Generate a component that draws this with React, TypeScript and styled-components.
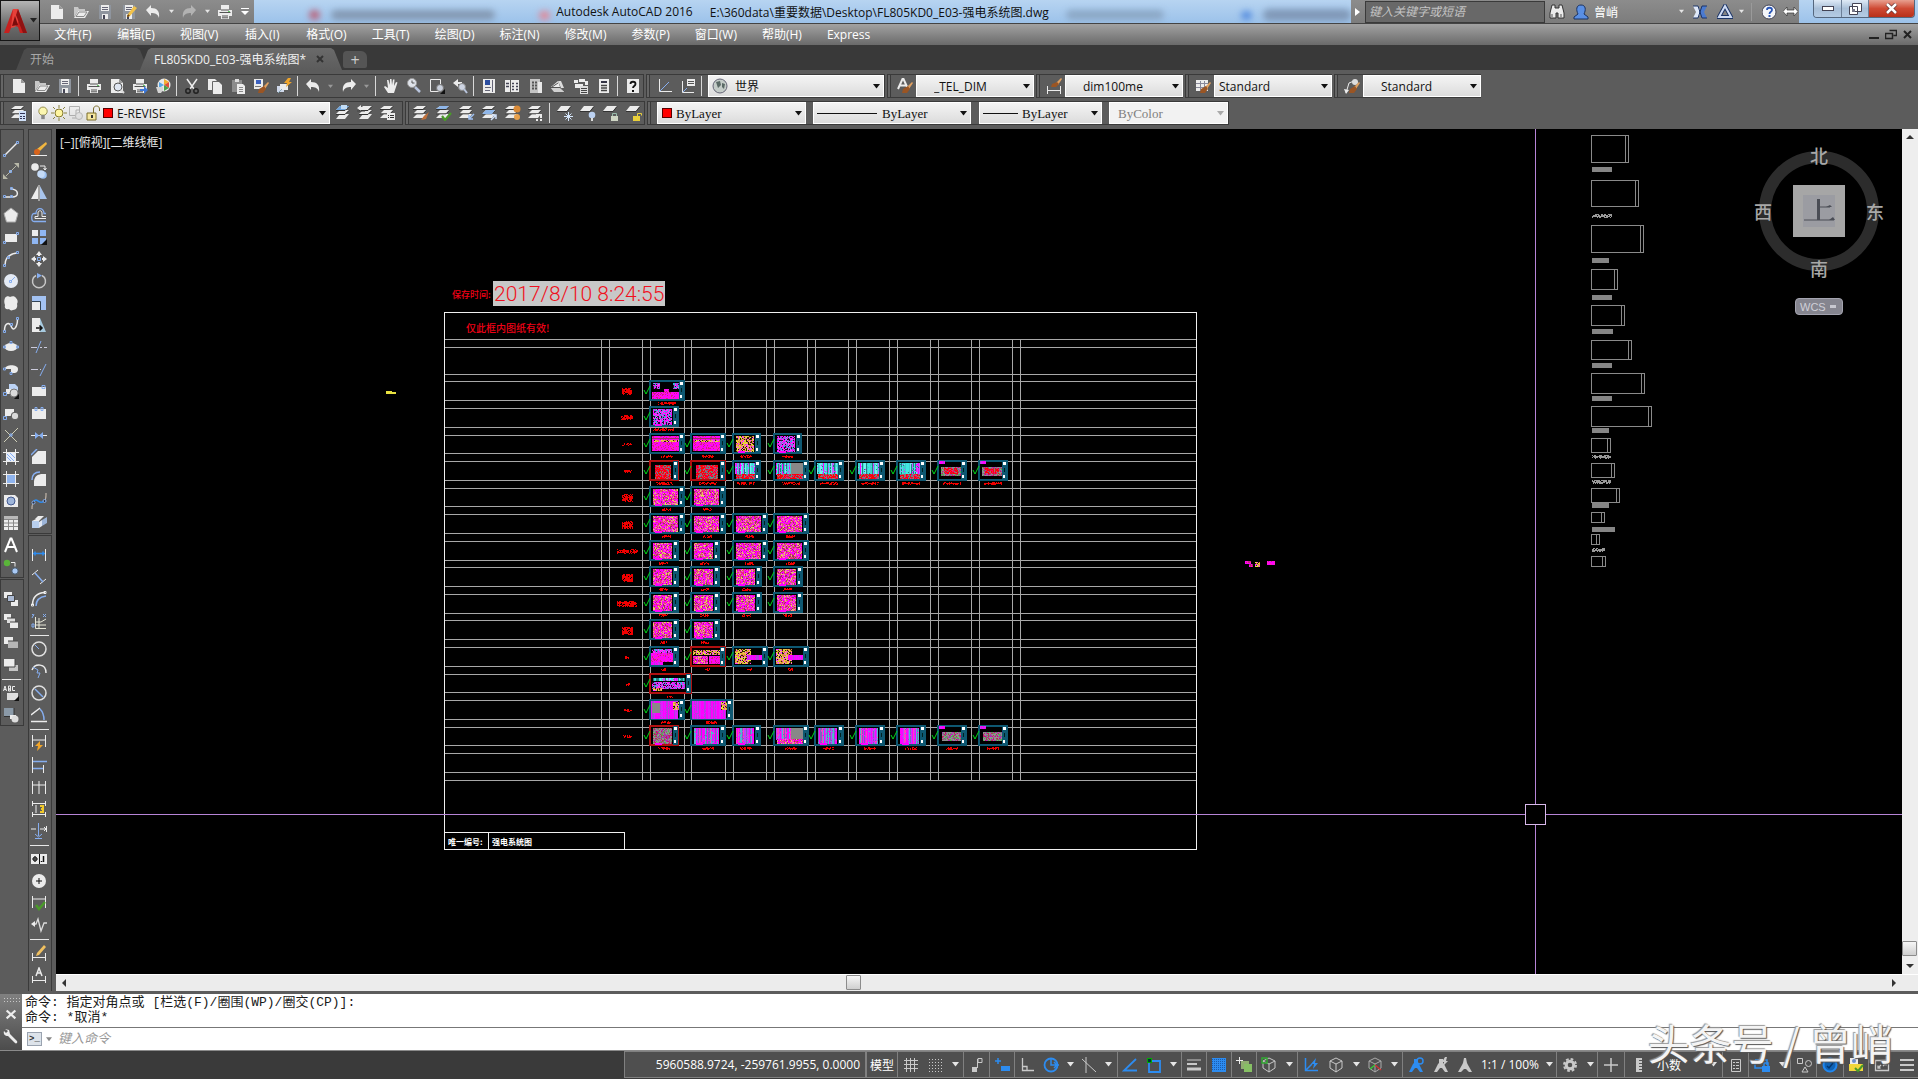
import React from "react";
import styled, { createGlobalStyle } from "styled-components";

/* ------------------------------------------------------------------ */
/* Base                                                                */
/* ------------------------------------------------------------------ */

const UI = `"Open Sans", "Noto Sans CJK SC", sans-serif`;
const MONO = `"Liberation Mono", "Noto Sans CJK SC", monospace`;

const GlobalStyle = createGlobalStyle`
  *, *::before, *::after { box-sizing: border-box; }
  body { margin: 0; background: #3a3a3a; font-family: ${UI}; font-size: 12px; overflow: hidden; }
  button, input, select { font: inherit; color: inherit; margin: 0; padding: 0; border: 0; background: none; border-radius: 0; outline: none; }
  svg { display: block; flex: none; }
`;

const Shell = styled.div`
  display: flex;
  flex-direction: column;
  height: 100vh;
  background: #5c5c5c;
`;

/* ------------------------------------------------------------------ */
/* Icons                                                               */
/* ------------------------------------------------------------------ */

type PProps = { d: string; c?: string; w?: number; f?: string };
const P = ({ d, c = "#ececec", w = 1, f = "none" }: PProps) => (
  <path d={d} stroke={c} strokeWidth={w} fill={f} />
);
const F = ({ d, c = "#ececec" }: { d: string; c?: string }) => <path d={d} fill={c} />;

const BL = "#86aef0";
const BR = "#2d8cf0";
const LG = "#c9c9c9";

const printer = (
  <>
    <F d="M4 1h8v5H4zM1 6h14v6H1zM4 10h8v5H4z" />
    <P d="M2.500 8.500h11M4 6h8M5 12h6M5 13.800h6" c="#555" />
    <F d="M11 7h2v1h-2z" c="#6c6" />
  </>
);
const page = <><F d="M2 1h8l4 4v10H2z" /><F d="M10 1v4h4z" c="#999" /></>;
const folder = <><F d="M1 13V3h4l1 2h6v2H5z" c="#c8c8c8" /><F d="M5 7h11l-4 7H1z" /><P d="M3 12.500h8l3-4.500H6z" c="#8a8a8a" /></>;
const floppy = <><F d="M2 1h12v14H2z" c="#8f959e" /><F d="M4 1h8v6H4zM5 10h6v5H5z" /><F d="M6 11h2v4H6z" c="#445" /><P d="M5 3.500h6M5 5.500h6" c="#667" /></>;
const undo = <F d="M1 6l5-5v3c6 0 9 3 8 10-1-4-4-5-8-5v3z" />;
const redo = <F d="M15 6l-5-5v3c-6 0-9 3-8 10 1-4 4-5 8-5v3z" />;
const stack = (
  <>
    <F d="M6 1h9l-4 4H2zM6 5h9l-4 4H2zM6 9h9l-4 5H2z" />
    <P d="M2 5.500h9l4-4M2 9.500h9l4-4" c="#333" />
  </>
);
const smallStack = <><F d="M4 1h9l-3 3H0zM4 5h9l-3 4H0zM4 9h9l-3 4H0z" /><P d="M0 4.500h10l3-3M0 8.800h10l3-3" c="#333" /></>;
const oneLayer = <><F d="M4 1h10l-4 5H0z" /><P d="M0 6.500h10l4-5" c="#333" /></>;
const dimH = (y: number) => <P d={`M1.500 ${y - 5}v12M14.500 ${y - 5}v12`} />;
const brush = <><F d="M15 4l-5 5 2 2 4-6z" c="#e0a060" /><F d="M11 8l-5 3-1 4 5 0 3-4z" c="#9a5524" /></>;
const person = (c: string) => <F d="M6 2h4v4l1 1 4 8h-3l-3-4h-2l-3 4H1l4-8 1-1z" c={c} />;
const cube = (c = LG) => <P d="M8 1l6 3v7l-6 4-6-4V4zM2 4l6 3 6-3M8 7v8" c={c} />;

const ICONS: Record<string, React.ReactNode> = {
  new: page,
  open: folder,
  save: floppy,
  saveAs: <>{floppy}<F d="M13 2l3 2-7 8-3 1 1-3z" c="#f2c24a" /><F d="M6 13l1-3 2 2z" c="#7a4b10" /></>,
  undo,
  redo,
  redoDim: <g opacity=".45">{redo}</g>,
  print: printer,
  preview: <>{page}<circle cx="9" cy="9" r="4" fill="#dfe6f2" stroke="#555" /><P d="M12 12l3 3" w={2} c="#ddd" /></>,
  publish: <>{printer}<F d="M8 11h4V8l4 4-4 4v-3H8z" c="#3d78d8" /></>,
  print3d: <><circle cx="9" cy="7" r="6.500" fill="#e8e8e8" /><F d="M9 1l5 3-5 3z" c="#f5b030" /><F d="M9 7l5-3v6z" c="#e0503a" /><F d="M9 7v6l5-3z" c="#4aa14a" /><F d="M9 7L4 4v6z" c="#57a7e8" /><F d="M1 9h7v3l-2 3H3z" c="#d4d4d4" /></>,
  cut: <><P d="M3 1l7 10M13 1L6 11" w={1.500} /><circle cx="4" cy="13" r="2.200" fill="none" stroke="#222" strokeWidth="1.500" /><circle cx="12" cy="13" r="2.200" fill="none" stroke="#222" strokeWidth="1.500" /></>,
  copy: <><F d="M1 1h7l2 2v9H1z" /><F d="M6 4h6l3 3v9H6z" /><P d="M5.500 15V3.500h6" c="#666" /></>,
  paste: <><F d="M2 2h10v12H2z" c="#8c8c8c" /><F d="M5 1h4v3H5z" c="#ddd" /><F d="M7 6h6l2 2v8H7z" /><P d="M9 9.500h4M9 11.500h4M9 13.500h4" c="#888" /></>,
  match: <><F d="M1 1h9v10H1z" /><F d="M3 2h5v4H3z" c="#3d62c0" /><P d="M2 8.500h6" c="#777" />{brush}</>,
  block: <><F d="M1 8h7v6H1z" c="#cfd8ea" /><F d="M4 6h8v6H4z" /><F d="M12 0L8 5h3l-1 4 6-5h-3l2-4z" c="#f0a52a" /><P d="M2 15l4-4" c="#8ab" /></>,
  hand: <F d="M5 15l-4-6 1-1 3 2-1-8h1.500l1.200 5L7 1h1.500l.5 6 1-5.500h1.500L11 8l2-4 1.500.5L12 12l-1 3z" />,
  zoomRt: <><circle cx="6" cy="5" r="4.500" fill="#dfe3ea" stroke="#999" /><P d="M6 2.500V5h2.500" c="#555" /><P d="M9 9l5 5" w={2.500} c="#b8c4dc" /></>,
  zoomWin: <><P d="M1.500 1.500h10v12h-10z" /><circle cx="11" cy="10" r="3.500" fill="#c9cfdb" stroke="#777" /><F d="M16 11v5h-5z" c="#111" /></>,
  zoomPrev: <><F d="M1 5l5-4v3h4v2H6v3z" /><circle cx="10" cy="9" r="3.500" fill="#cdd4e2" stroke="#888" /><P d="M12 11l3 4" w={2} c="#b8c4dc" /></>,
  props: <><F d="M2 1h12v14H2z" /><F d="M4 2h5v5H4z" c="#2c4ea0" /><P d="M11.500 2v12M4 9.500h6M4 12.500h5" c="#667" /></>,
  designCenter: <><F d="M1 2h5v12H1zM7 2h8v12H7z" /><P d="M2 5.500h3M2 8.500h3M8 5.500h2M12 5.500h2M8 8.500h2M12 8.500h2M8 11.500h2M12 11.500h2" c="#445" w={1.500} /></>,
  toolPalette: <><F d="M3 1h10v14H3z" c="#c4c4c4" /><F d="M11 4h4v11h-4z" c="#e8e8e8" /><P d="M5 4.500h2M5 7.500h2M5 10.500h2M8 4.500h2M8 7.500h2M8 10.500h2" w={2} c="#555" /></>,
  sheetSet: <><F d="M1 9l7-6 2 6z" /><F d="M8 3l3 0 3 7h-3z" c="#ddd" /><F d="M0 9h10l5 5H4z" c="#d0d0d0" /><P d="M2 9l6-4M0 9.500h10l5 4.500" c="#555" /></>,
  markup: <><F d="M1 2h4v3H1zM6 1h6v3H6zM12 3h3v4h-3zM2 6h8v4H2z" /><F d="M7 8h8v8H7z" c="#ddd" /><P d="M8 10.500h6M8 12.500h6M8 14.500h6" c="#444" /></>,
  calc: <><F d="M3 1h10v14H3z" /><F d="M5 3h6v2H5z" c="#334" /><P d="M5 7.500h6M5 10h6M5 12.500h6" c="#444" w={1.500} /></>,
  help: <><F d="M2 1h12v14H2z" /><P d="M5.500 6c0-3 5-3 5 0 0 2-2.500 2-2.500 4" c="#111" w={1.800} /><F d="M7 12h2v2H7z" c="#111" /></>,
  ucs: <><P d="M2.500 1v12.500H15" /><P d="M3 13l9-9" c={BL} /></>,
  ucsNamed: <><P d="M2.500 3v11.500H14" /><F d="M7 1h8v7H7z" /><P d="M8 3.500h6M8 5.500h6" c="#555" /><P d="M3 14l4-4" c={BL} /></>,
  textStyle: <><P d="M1 11L5.500 1h1L11 11M3 7.500h6" w={2} />{brush}</>,
  dimStyle: <><P d="M1.500 8v8M14.500 8v8M2 12.500h12" /><F d="M15 0l-5 5 2 2 4-6z" c="#e0a060" /><F d="M11 4L6 6 5 9h5l3-3z" c="#9a5524" /></>,
  tableStyle: <><F d="M1 2h12v11H1z" /><P d="M1 5.500h12M1 9.500h12M5.500 3v10M9.500 3v10" c="#889" />{brush}</>,
  leaderStyle: <><P d="M2 15L5 5l5-2" /><F d="M0 11l5 1-3 4z" /><circle cx="11" cy="4" r="3" fill="#ddd" />{brush}</>,
  layerProps: <>{smallStack}<F d="M8 6h7v10H8z" c="#cfe0f8" /><P d="M9 8.500h5M9 11.500h2M12 11.500h2M9 13.500h2M12 13.500h2" c="#335" /></>,
  bulb: <><circle cx="8" cy="6" r="4.800" fill="#fbf6b0" stroke="#8a8340" /><F d="M6 10h4v5H6z" c="#888" /></>,
  sun: <><circle cx="8" cy="8" r="4" fill="#fff6a0" stroke="#857a30" /><P d="M8 0v3M8 13v3M0 8h3M13 8h3M2 2l2 2M12 12l2 2M14 2l-2 2M4 12l-2 2" c="#8a8340" /></>,
  vpFreeze: <g opacity=".6"><P d="M1.500 1.500h10v9h-10zM4 13h4v-8h4" c="#888" /><circle cx="11" cy="11" r="3.500" fill="#ddd" stroke="#999" /></g>,
  unlock: <><F d="M2 8h9v7H2z" c="#f5e7a0" /><P d="M2 8h9v7H2zM8.500 8V4c0-4 6-4 6 0v2" c="#7a6c2a" /><F d="M6 10h2v3H6z" c="#333" /></>,
  layerCurrent: <>{stack}<F d="M6 1h9l-4 4H2z" c="#6ea4dc" /><F d="M7 0h6v4H7z" c="#c2dcf5" /></>,
  layerPrev: <>{stack}<F d="M0 3l4-3v2h4v2H4v2z" /><P d="M0 6h8" c="#444" /></>,
  layerState: <>{smallStack}<F d="M7 8h8v7H7z" /><P d="M8 10.500h1M10 10.500h4M8 12.500h1M10 12.500h4" c="#333" /></>,
  layMatch: <>{smallStack}<F d="M16 7l-5 4-3 4 5-1z" c="#c0703a" /></>,
  layCheck: <>{smallStack}<F d="M4 1h9l-3 3H0z" c="#8fb6e8" /><P d="M6 11l3 4 6-7" c="#4a9a2a" w={2.200} /></>,
  layIso: <>{smallStack}<P d="M15 9l-5 5m0-4v4h4" c="#9fc0f2" w={1.500} /></>,
  layUniso: <>{smallStack}<F d="M4 5h9l-3 4H0z" c="#8fb6e8" /><P d="M9 15l5-5m-4 0h4v4" c="#cfdff8" w={1.500} /></>,
  layFreezeVp: <>{smallStack}<circle cx="12" cy="4" r="3.500" fill="#d88a38" /><circle cx="12" cy="12" r="3" fill="#e8a04a" /></>,
  layWalk: <>{smallStack}<F d="M8 9h2v4H8zM12 9h2v4h-2zM8 14h2v2H8zM12 14h2v2h-2z" /></>,
  layFreeze: <>{oneLayer}<P d="M11.500 7v9M7 11.500h9M8.500 8.500l6 6M14.500 8.500l-6 6" c="#d5e6fb" /></>,
  layOff: <>{oneLayer}<circle cx="12" cy="10" r="3.300" fill="#bcd2f2" /><F d="M11 13h2v3h-2z" c="#ddd" /></>,
  layLock: <>{oneLayer}<F d="M8 11h7v5H8z" c="#cfd6c4" /><P d="M9.500 11V8.500h4V11" c="#9ba" /></>,
  layUnlock: <>{oneLayer}<F d="M7 11h7v5H7z" c="#e8cf3a" /><P d="M11.500 11V8.500h4v2" c="#e8cf3a" /></>,

  line: <><P d="M2 14L14 2" w={1.500} /><P d="M.5 13.500h2v2h-2zM13.500.5h2v2h-2z" c={BL} /></>,
  xline: <><P d="M3 13L13 3" c="#b8b8a8" /><F d="M0 16v-5l5 5zM16 0v5l-5-5z" c="#b8b8a8" /><P d="M6.500 7.500h2v2h-2z" c={BL} /></>,
  pline: <><P d="M2 12h6c9 1 8-8 0-8" w={1.500} /><P d="M.5 10.500h2v2h-2zM7.500 10.500h2v2h-2zM7.500 2.500h2v2h-2z" c={BL} /></>,
  polygon: <P d="M8 1l7 5.500-2.500 8.500h-9L1 6.500z" f="#ececec" c="#aaa" />,
  rect: <><F d="M2 5h12v8H2z" /><P d="M.5 12.500h2v2h-2zM13.500 3.500h2v2h-2z" c={BL} /></>,
  arc: <><P d="M2 14C2 7 6 3 14 2" w={1.500} /><P d="M.5 13.500h2v2h-2zM4.500 5.500h2v2h-2zM13.500.5h2v2h-2z" c={BL} /></>,
  circle: <><circle cx="8" cy="8" r="7" fill="#e4eaf4" /><P d="M8 8l4-4M6.500 7.500h2v2h-2z" c={BL} /></>,
  cloud: <F d="M2 3c1-2 4-2 5-1 2-1 5-1 6 1 2 2 2 4 1 6 1 3-1 6-4 6-2 1-3 0-4-1-3 1-5-1-4-4-1-2-1-5 0-7z" />,
  spline: <><P d="M1.500 14c0-9 5-9 7-4s6 0 6-8" w={1.500} /><P d="M.5 13.500h2v2h-2zM7.500 6.500h2v2h-2zM13.500.5h2v2h-2z" c={BL} /></>,
  ellipse: <><ellipse cx="8" cy="8" rx="6.500" ry="4" fill="#ececec" /><P d="M.5 7h2v2h-2zM13.500 7h2v2h-2zM7 2.500h2v2h-2z" c={BL} /></>,
  ellipseArc: <><path d="M2 8c0-5 13-5 13 0s-5 4-7 4V8z" fill="#ececec" /><P d="M.5 7h2v2h-2zM7 11.500h2v2h-2z" c={BL} /></>,
  insert: <><F d="M6 1h6l3 3v5H6z" c="#bcd3f5" /><F d="M3 6h8v5H3z" /><circle cx="11" cy="10" r="4" fill="#dadada" stroke="#777" /><P d="M.5 9.500h3v3h-3z" c={BL} /><F d="M16 11v5h-5z" c="#111" /></>,
  makeBlock: <><F d="M2 4h9v7H2z" /><circle cx="12" cy="11" r="3.800" fill="#dadada" stroke="#555" /><P d="M.5 11.500h3v3h-3z" c={BL} /></>,
  point: <><P d="M1 15L15 1M2 3l12 12" c="#cfcfb8" /><P d="M7 7h2v2H7z" c={BL} /></>,
  hatch: <><F d="M4 4h8v8H4z" c="#e6eefb" /><P d="M4 8l4 4M4 5l7 7M7 4l5 5" c={BL} /><P d="M0 3.500h16M0 12.500h16M3.500 0v16M12.500 0v16" /></>,
  gradient: <><F d="M4 4h9v9H4z" c="#8fb4ee" /><P d="M0 3.500h16M0 12.500h16M3.500 0v16M12.500 0v16" /></>,
  region: <><F d="M1 2h11l3 3v9H1z" /><circle cx="8" cy="8" r="4" fill="#9fb6da" stroke="#445a90" /></>,
  table: <><F d="M1 1h14v14H1z" /><F d="M1 1h14v3H1z" c="#b8b8b8" /><P d="M1 4.500h14M1 8h14M1 11.500h14M5.500 4v11M10.500 4v11" c="#888" /></>,
  mtext: <P d="M2 15L7.500 1.500h1L14 15M4 10h8" w={2} c="#fff" />,
  addSel: <><circle cx="4" cy="4" r="3.200" fill="#5ab53a" /><circle cx="12" cy="12" r="3.200" fill="#a9c9f5" stroke="#456" /><P d="M8 3.500h4v4" /></>,
  front: <><F d="M1 1h8v6H1zM8 9h7v6H8z" /><P d="M4.500 4.500h7v6h-7z" c="#444" f="#a9b8d2" /></>,
  back: <><F d="M1 1h7v6H1z" /><F d="M4 5h8v5H4z" c="#ddd" /><F d="M7 9h8v6H7z" /><P d="M4 5h8M7 9h8" c="#444" /></>,
  above: <><F d="M1 2h9v7H1z" /><F d="M5 6h10v7H5z" c="#b5b5b5" /><P d="M5 6h10" c="#444" /></>,
  under: <><F d="M6 8h9v6H6z" c="#c5c5c5" /><F d="M1 2h11v8H1z" /><P d="M1 10h11V2" c="#444" /></>,
  textFront: <><P d="M.5 6l1.500-5L3.500 6M1 4.500h2M5.500 1v5h2V4h-2 2V1h-2M12 1.500H9.500v4H12" /><F d="M4 8h11v7H4z" c="#ddd" /><F d="M16 11v5h-5z" c="#111" /></>,
  hatchBack: <><F d="M1 1h10v8H1z" c="#8b9aa8" /><P d="M1 9.500h10V1" c="#333" /><F d="M7 8h6v4H7z" /><circle cx="12" cy="12" r="3.500" fill="#ddd" /></>,

  erase: <><P d="M0 14.500h16" /><F d="M15 1l1 2-7 7-3-2z" c="#f0b640" /><circle cx="6" cy="11" r="3" fill="#d8641c" /></>,
  copyObj: <><circle cx="4" cy="4" r="3.800" fill="#ececec" /><circle cx="12" cy="12" r="3.800" fill="#9cc0f0" /><circle cx="10" cy="11" r="3.800" fill="#c4daf6" /><P d="M9 3h5v4M12.500 5l1.500 2 1.500-2" /></>,
  mirror: <><F d="M7 1v13H0z" /><F d="M9 1v13h7z" c="#a8c4ec" /><P d="M8 0v16" /></>,
  offset: <><P d="M15 6.500h-2C13 0 5 0 5 6.500H3c-3 0-3 8 0 8h12" c={BL} w={1.300} /><P d="M15 9.500h-4V6c0-3-4-3-4 0v3.500H4v2h11" /></>,
  array: <><F d="M1 1h6v6H1z" /><F d="M9 1h6v6H9zM1 9h6v6H1zM9 9h6v6H9z" c="#8fb6f2" /><F d="M16 10v6h-6z" c="#111" /></>,
  move: <><F d="M8 0l3 4H5zM8 16l3-4H5zM0 8l4-3v6zM16 8l-4-3v6z" /><P d="M8 3v2M8 11v2M3 8h2M11 8h2" w={2} /><P d="M6.500 6.500h3v3h-3z" c={BL} /></>,
  rotate: <><P d="M5 2.500a6.500 6.500 0 1 0 6 0" w={1.500} c="#c8c8c8" /><F d="M6 0l5 2.500-5 3z" c={BL} /></>,
  scale: <><F d="M1 1h14v14H1z" c="#a3c2f2" /><F d="M1 7h8v8H1z" /><P d="M1 6.500h8.500V15" c="#345" /></>,
  stretch: <><F d="M1 1h8v14H1z" /><F d="M9 1l6 14H9z" c="#a8cbe0" /><P d="M5 11h5M8.500 8.500L11 11l-2.500 2.500" c="#111" w={1.500} /></>,
  trim: <><P d="M0 8.500h6M9 8.500h2M13 8.500h3" c="#ccd" /><P d="M5 14L10 2" c={BL} /></>,
  extend: <><P d="M0 8.500h7M9 8.500h1" c="#ccd" /><P d="M9 15L15 3" c={BL} /></>,
  breakPt: <><F d="M1 4h14v9H1z" /><P d="M11 2.500h3v3h-3z" c={BL} /></>,
  breakObj: <><F d="M1 4h14v10H1z" /><P d="M4 2.500h2v3H4zM10 2.500h2v3h-2z" c={BL} /></>,
  join: <><P d="M0 8.500h16" /><F d="M4 5l4 3.500L4 12zM12 5L8 8.500l4 3.500z" c={BL} /></>,
  chamfer: <><F d="M7 2h8v13H1V8z" /><P d="M0 6l6-6" c={BL} w={1.500} /></>,
  fillet: <><F d="M10 3h5v12H3v-5c1-5 3-6 7-7z" /><P d="M1 9C1 4 4 1 9 1" c={BL} w={1.500} /></>,
  blend: <><P d="M1 16c0-3 0-4 1.500-6M14 8c1-3 1-5 1-8" c="#d8c8b8" /><P d="M2.500 9C6 3 8 13 13 8" c={BR} w={1.500} /><circle cx="2.500" cy="9.500" r="1.500" fill="#333" stroke={BL} /><circle cx="13.500" cy="8" r="1.500" fill="#333" stroke={BL} /></>,
  explode: <><F d="M7 1h6l-3 3H4z" /><F d="M1 6h7v7H1z" c="#b8cfee" /><F d="M11 5l5-3v6l-5 3z" c="#9cb4d8" /><F d="M1 6l4-2h5l-2 2z" c="#eee" /><F d="M8 7l3-2v6l-3 2z" c="#dfe6f2" /></>,

  dLinear: <>{dimH(7)}<P d="M2 6.500h12M4 4.500v4M12 4.500v4" c={BR} w={1.500} /></>,
  dAligned: <><P d="M1 6l6-5M9 15l6-5" /><P d="M4 4l8 9" c={BL} w={1.500} /></>,
  dArc: <><P d="M1.500 14C1.500 7 5 2 14 1.500" w={1.500} /><P d="M5 15C5 10 8 6 15 5" c={BL} w={1.500} /><P d="M.5 13h2v2h-2zM13 .5h2v2h-2z" /></>,
  dOrdinate: <><P d="M4.500 4v11.500H15M8 5v10M5 9h5l5-3M5 12h10" c="#e8e8d8" /><P d="M1 1l2 2M3 1l-2 4M12 1l3 3M15 1l-3 3M1 11h2v3H1z" c={BL} /></>,
  dRadius: <><circle cx="8" cy="8" r="7" fill="none" stroke="#e0e0e0" strokeWidth="1.500" /><P d="M8 8L4 4" c={BL} /></>,
  dJogged: <><P d="M1 7C4 0 15 0 15 10" w={1.500} /><P d="M2 4l5 3-1 3h3l-2 5" c={BL} /></>,
  dDiameter: <><circle cx="8" cy="8" r="7" fill="none" stroke="#e0e0e0" strokeWidth="1.500" /><P d="M4 4l8 8" c={BL} w={1.500} /></>,
  dAngular: <><P d="M0 14.500h16M0 8l9-7" w={1.500} /><P d="M9 2c3 3 4 7 4 11" c={BL} w={1.500} /></>,
  dQuick: <>{dimH(5)}<P d="M2 5h12" /><F d="M9 6l-5 5h3l-1 5 6-6H9z" c="#f0a52a" /></>,
  dBaseline: <><P d="M1.500 0v16M12.500 8v8" /><P d="M2 4.500h14M2 11.500h10" c={BL} w={1.500} /></>,
  dContinue: <P d="M1.500 2v13M8 2v13M14.500 2v13M2 6h12" />,
  dSpace: <><P d="M1 2.500h14M1 13.500h14M1.500 0v5M14.500 0v5M1.500 11v5M14.500 11v5M5 4v8" /><P d="M9 5h3v3h-2M12 8v3H9" c="#f0c82a" w={2} /></>,
  dBreak: <><P d="M0 6h5M9 6h6M13 4l2 2-2 2M15.500 3v6" /><P d="M7.500 0v13M4 11l3.500 3 3.500-3M4 15.500h7" c={BL} /></>,
  tolerance: <><F d="M0 3h16v10H0z" /><P d="M8.500 3v10M4 5v6M1.500 8h5" c="#111" /><circle cx="4" cy="8" r="2" fill="none" stroke="#111" /><P d="M12.500 5v6M10.500 10v1" c="#111" w={1.500} /></>,
  centerMark: <><circle cx="8" cy="8" r="7" fill="#ececec" /><P d="M8 5v6M5 8h6" c="#111" /></>,
  inspect: <>{dimH(6)}<P d="M2 4h12" /><P d="M5 10l3 4 6-7" c="#4a9a2a" w={2.500} /></>,
  jogLine: <><P d="M2 7h3l2-5 3 12 3-8h3" w={1.300} c="#ddd" /><F d="M0 7l4-3v6z" /></>,
  dEdit: <><P d="M1.500 8v8M14.500 8v8M2 12.500h12" /><F d="M13 0l2 2-7 8-3 1 1-3z" c="#f0c060" /></>,
  dTextEdit: <><P d="M1.500 9v7M14.500 9v7M2 13.500h12" /><P d="M5 9l3-8 3 8M6 6h4" w={1.500} /></>,
  dUpdate: <P d="M1.500 2v4M14.500 2v4M5 3h6" />,

  grid: <P d="M3.500 1v14M7.500 1v14M11.500 1v14M1 3.500h14M1 7.500h14M1 11.500h14" c={LG} />,
  snap: <g stroke={LG} strokeDasharray="1 2"><path d="M1 2.500h15M1 5.500h15M1 8.500h15M1 11.500h15M1 14.500h15" /></g>,
  infer: <><P d="M9 1.500h4v4H9zM8.500 2v9" c={LG} /><F d="M3 10h5v5H3z" c={LG} /></>,
  dyn: <><P d="M4 1v6M1 4h6" c={BR} w={1.500} /><F d="M7 9h9v5H7z" c={BR} /></>,
  ortho: <P d="M3.500 1v12.500H15M3 9.500h5V13" c={LG} w={1.300} />,
  polar: <><circle cx="8" cy="8" r="6.500" fill="none" stroke={BR} strokeWidth="1.800" /><P d="M8 2v6h8M11 5l3 3-3 3" c={BR} w={1.500} /></>,
  iso: <P d="M1 2l14 13M5 0v16" c={LG} />,
  otrack: <P d="M14 2L2 13.500h13" c={BR} w={1.800} />,
  osnap: <><P d="M3 4h11v11H3z" c={BR} w={1.800} /><F d="M1 1h5v5H1z" c="#0a0" /><F d="M2 2h3v3H2z" c="#033" /></>,
  lwt: <><P d="M1 3h14" c={LG} /><P d="M1 7h10" c={LG} w={2} /><P d="M1 12h14" c={LG} w={3} /></>,
  transparency: <><F d="M1 1h14v14H1z" c={BR} /><g stroke="#1b5cae" strokeDasharray="1 1"><path d="M1 2.500h14M1 4.500h14M1 6.500h14M1 8.500h14M1 10.500h14M1 12.500h14" /></g></>,
  cycling: <><F d="M5 4h8v8H5z" c="#8fae70" /><F d="M8 7h8v8H8z" c="#86bf64" /><P d="M3.500 0v7M0 3.500h7" /></>,
  osnap3d: <>{cube()}<P d="M1 1h5v5H1z" c="#3a3" w={1.500} /></>,
  ducs: <><P d="M2.500 1v12.500H15M3 13L9 7" c={BR} w={1.500} /><F d="M13 1L8 7h3l-1 5 5-6h-3z" c={BR} /></>,
  cube: cube(),
  gizmo: <>{cube("#aaa")}<P d="M8 8l-5 4" c="#3c3" w={1.500} /><P d="M8 8l6 5" c="#c33" w={1.500} /></>,
  annVisible: <>{person(BR)}<circle cx="12" cy="4" r="3" fill="none" stroke={BR} strokeWidth="1.500" /></>,
  annAuto: <>{person(LG)}<F d="M12 0l-3 5h2l-1 4 5-5h-2l1-4z" c={LG} /></>,
  annScale: <F d="M7 1h2l1 5 1 2 4 7h-3l-3-3H7l-3 3H1l4-7 1-2z" c={LG} />,
  gear: <><circle cx="8" cy="8" r="3.800" fill="none" stroke={LG} strokeWidth="3" /><circle cx="8" cy="8" r="6" fill="none" stroke={LG} strokeWidth="2" strokeDasharray="2.700 2" /></>,
  plus: <P d="M8 1v14M1 8h14" c={LG} w={1.500} />,
  ruler: <><F d="M5 1h6v14H5z" c={LG} /><P d="M8 3.500h3M8 6.500h3M8 9.500h3M8 12.500h3" c="#555" /></>,
  quickProps: <><P d="M3.500 2.500h9v12h-9z" c={LG} /><P d="M5 5.500h2M8 5.500h3M5 8.500h2M8 8.500h3M5 11.500h2M8 11.500h3" c={LG} /></>,
  lockUi: <><P d="M1 3h12v5M1 3v8h7" c={BR} w={1.500} /><F d="M8 9h8v6H8z" c={BR} /><P d="M10 9V6h4v3" c={BR} w={1.500} /></>,
  isolate: <><P d="M1.500 1.500h5v5h-5zM6 15l3-5 3 5z" c={LG} /><circle cx="12.500" cy="6.500" r="3" fill="none" stroke={LG} /></>,
  hardware: <><circle cx="8" cy="8" r="6.500" fill="#0f62b4" stroke="#2287ee" strokeWidth="2" /><P d="M5 9l2 2 4-5" c="#04366e" w={1.500} /></>,
  trusted: <><F d="M2 1h8v6H2z" /><F d="M1 7h14v7H1z" c="#f0d63a" /><circle cx="6" cy="4" r="2" fill="#6a8cc8" /><P d="M7 11l3 3 5-6" c="#4a9a2a" w={2} /></>,
  clean: <P d="M1.500 3.500h13v10h-13zM4 11l3-3M4 8.500V11h2.500M12 6L9 9M12 8.500V6H9.500" c={LG} w={1.300} />,
  menu: <P d="M1 3h14M1 8h14M1 13h14" c={LG} w={1.800} />,

  binoc: <><F d="M3 1h3v3h4V1h3l2 8v5h-6V9H7v5H1V9z" /><P d="M3 1h3v3h4V1h3l2 8v5H9V9H7v5H1V9z" c="#333" /><P d="M3 10v3M12 10v3" c="#555" /></>,
  user: <><F d="M8 1c5 0 5 5 3 9l4 3v2H1v-2l4-3C3 6 3 1 8 1z" c="#5a8fe4" /><P d="M8 1c5 0 5 5 3 9l4 3v2H1v-2l4-3C3 6 3 1 8 1z" c="#1b3260" /></>,
  exchange: <><F d="M1 2h5l3 6-3 6H1l3-6z" c="#dfe8f8" /><F d="M15 2h-5L7 8l3 6h5l-3-6z" c="#4a7ad0" /><P d="M1 2h5l4 12h5M15 2h-5L6 14H1" c="#1d3566" /></>,
  a360: <><P d="M8 2L2 13h12z" c="#1d3566" w={4} /><P d="M8 2L2 13h12z" c="#cfdcf4" w={2} /></>,
  helpRound: <><circle cx="7" cy="8" r="7" fill="#f4f6fa" stroke="#445" /><P d="M5 6c0-3 5-3 5 0 0 2-2.500 1.500-2.500 4" c="#2a57b8" w={1.800} /><F d="M6.500 11h2v2h-2z" c="#2a57b8" /></>,
  wrench: <F d="M2 1l4 1 1 4 7 7c1 2-1 3-2 2L5 8C2 8 0 6 1 3l2 2 2-2z" />,
  closeX: <P d="M3 4l10 9M13 4L3 13" w={2.500} />,
};

const Icon = ({ name, size = 16 }: { name: string; size?: number }) => (
  <svg width={size} height={size} viewBox="0 0 16 16" aria-hidden="true">{ICONS[name]}</svg>
);

const Caret = ({ color = "#e6e6e6", w = 7 }: { color?: string; w?: number }) => (
  <svg width={w} height="5" viewBox="0 0 7 5" aria-hidden="true"><path d="M0 0h7L3.500 4.500z" fill={color} /></svg>
);

const IconButton = styled.button<{ $w?: number; $h?: number }>`
  display: flex;
  align-items: center;
  justify-content: center;
  flex: none;
  width: ${(p) => p.$w ?? 23}px;
  height: ${(p) => p.$h ?? 22}px;
`;

/* ------------------------------------------------------------------ */
/* Header                                                              */
/* ------------------------------------------------------------------ */

const Header = styled.header`
  display: flex;
  flex: none;
  background: linear-gradient(#6a6a6a, #5e5e5e);
`;
const AppButton = styled.button`
  display: flex;
  align-items: center;
  justify-content: center;
  gap: 1px;
  width: 40px;
  height: 41px;
  border: 1px solid #161616;
  background: linear-gradient(#b4b4b4, #6c6c6c 60%, #585858);
`;
const HeaderRows = styled.div`
  flex: 1;
  min-width: 0;
`;
const TitleBar = styled.div`
  display: flex;
  height: 24px;
  border-bottom: 1px solid #444;
  background: linear-gradient(#b7d4f1, #9cc2ea);
`;
const QuickAccess = styled.div`
  display: flex;
  align-items: center;
  padding: 0 1px 0 5px;
  background: linear-gradient(#8c8c8c, #7c7c7c);
`;
const TitleArea = styled.div`
  position: relative;
  flex: 1;
  display: flex;
  align-items: center;
  justify-content: center;
  gap: 17px;
  overflow: hidden;
  color: #111;
  font-size: 12px;
  white-space: nowrap;
`;
const Smudge = styled.span<{ $l: number; $w: number; $c: string; $h: number }>`
  position: absolute;
  left: ${(p) => p.$l}%;
  top: ${(p) => 15 - p.$h / 2}px;
  width: ${(p) => p.$w}%;
  height: ${(p) => p.$h}px;
  border-radius: 6px;
  background: ${(p) => p.$c};
  filter: blur(3px);
`;
const TitleText = styled.span`position: relative;`;
const InfoCenter = styled.div`
  display: flex;
  align-items: center;
  background: linear-gradient(#8c8c8c, #7c7c7c);
  color: #fff;
`;
const InfoSearch = styled.input`
  width: 180px;
  height: 22px;
  margin-left: 2px;
  padding-left: 3px;
  border: 1px solid #3a3a3a;
  background: #686868;
  font-style: italic;
  &::placeholder { color: #c4c4c4; opacity: 1; }
`;
const UserName = styled.button`
  width: 82px;
  padding-left: 1px;
  text-align: left;
`;
const InfoRule = styled.span`
  width: 1px;
  height: 18px;
  margin: 0 6px;
  background: #9a9a9a;
`;
const WindowButtons = styled.div`
  display: flex;
  height: 18px;
  margin: 0 3px 0 14px;
  border: 1px solid #55677e;
  border-top: 0;
  border-radius: 0 0 4px 4px;
  overflow: hidden;
`;
const WinButton = styled.button<{ $close?: boolean }>`
  display: flex;
  align-items: center;
  justify-content: center;
  width: ${(p) => (p.$close ? 46 : 27)}px;
  background: ${(p) => (p.$close ? "linear-gradient(#e8a090, #cf4a34 50%, #b8301a)" : "linear-gradient(#dfeaf6, #a8bfd8 50%, #b4cbe4)")};
  & + & { border-left: 1px solid #6c7f98; }
`;
const MenuBar = styled.nav`
  display: flex;
  align-items: center;
  height: 21px;
  padding: 0 2px 0 14px;
  gap: 25px;
  background: linear-gradient(#a2a2a2, #6a6a6a);
`;
const MenuItem = styled.button`
  min-width: 38px;
  color: #fff;
  font-size: 12px;
  line-height: 20px;
  white-space: nowrap;
`;
const DocButtons = styled.div`
  display: flex;
  margin-left: auto;
`;

const TabBar = styled.div`
  display: flex;
  align-items: flex-end;
  flex: none;
  height: 25px;
  padding-left: 16px;
  background: #393939;
`;
const Tab = styled.div<{ $active?: boolean; $w: number }>`
  display: flex;
  align-items: center;
  gap: 10px;
  width: ${(p) => p.$w}px;
  height: 22px;
  padding-left: 14px;
  margin-right: ${(p) => (p.$active ? 1 : -8)}px;
  background: ${(p) => (p.$active ? "linear-gradient(#6a6a6a, #5c5c5c)" : "#4b4b4b")};
  color: ${(p) => (p.$active ? "#f0f0f0" : "#a8a8a8")};
  clip-path: polygon(0 100%, 8px 2px, 11px 0, calc(100% - 11px) 0, calc(100% - 8px) 2px, 100% 100%);
  white-space: nowrap;
`;
const NewTab = styled.button`
  width: 24px;
  height: 17px;
  margin-bottom: 2px;
  background: #555;
  color: #ccc;
  font-size: 16px;
  line-height: 16px;
  border-radius: 4px 6px 2px 2px;
`;

/* ------------------------------------------------------------------ */
/* Toolbars                                                            */
/* ------------------------------------------------------------------ */

const Toolbars = styled.div`
  display: flex;
  flex-direction: column;
  flex: none;
  gap: 3px;
  padding: 4px 0;
`;
const ToolbarRow = styled.div`
  display: flex;
  gap: 2px;
`;
const Group = styled.div<{ $grip: number; $end?: number }>`
  display: flex;
  align-items: center;
  height: 24px;
  padding-left: ${(p) => p.$grip}px;
  padding-right: ${(p) => p.$end ?? 0}px;
  box-shadow: inset 0 0 0 1px #3a3a3a, inset 3px 0 0 #666, inset 4px 0 0 #3a3a3a;
`;
const ToolSep = styled.span`
  flex: none;
  width: 1px;
  height: 20px;
  margin: 0 3px 0 2px;
  background: #d8d8d8;
`;
const ComboBox = styled.div<{ $w: number; $l?: number; $off?: boolean }>`
  display: flex;
  align-items: center;
  position: relative;
  width: ${(p) => p.$w}px;
  height: 22px;
  margin-left: ${(p) => p.$l ?? 0}px;
  border: 1px solid #fff;
  background: ${(p) => (p.$off ? "#f2f2f2" : "linear-gradient(#f4f4f4, #dcdcdc)")};
  color: ${(p) => (p.$off ? "#808080" : "#111")};
`;
const ComboSelect = styled.select<{ $pad: number; $serif?: boolean }>`
  appearance: none;
  position: absolute;
  inset: 0;
  width: 100%;
  padding-left: ${(p) => p.$pad}px;
  font-family: ${(p) => (p.$serif ? `"Liberation Serif", serif` : UI)};
  font-size: ${(p) => (p.$serif ? 13 : 12)}px;
  &:disabled { opacity: 1; color: #808080; }
`;
const ComboLead = styled.span`
  display: flex;
  align-items: center;
  gap: 1px;
  padding-left: 3px;
`;
const ComboCaret = styled.span`
  margin: 0 3px 0 auto;
  pointer-events: none;
`;
const Swatch = styled.span`
  width: 10px;
  height: 10px;
  margin-left: 1px;
  border: 1px solid #500;
  background: #f00;
`;
const Stroke = styled.span<{ $w: number }>`
  width: ${(p) => p.$w}px;
  height: 1px;
  background: #111;
`;

type ComboProps = { label: string; value: string; w: number; pad: number; l?: number; off?: boolean; serif?: boolean; lead?: React.ReactNode };
const Combo = ({ label, value, w, pad, l, off, serif, lead }: ComboProps) => (
  <ComboBox $w={w} $l={l} $off={off}>
    <ComboLead>{lead}</ComboLead>
    <ComboSelect aria-label={label} $pad={pad} $serif={serif} disabled={off} defaultValue={value}>
      <option>{value}</option>
    </ComboSelect>
    <ComboCaret><Caret color={off ? "#aaa" : "#111"} /></ComboCaret>
  </ComboBox>
);

/* "|" is a separator, "v" a drop-down arrow, anything else an icon. */
const Tools = ({ items }: { items: string }) => (
  <>
    {items.split(" ").map((n, i) =>
      n === "|" ? <ToolSep key={i} /> : n === "v" ? (
        <IconButton key={i} $w={13} aria-label="more"><Caret color="#999" w={5} /></IconButton>
      ) : (
        <IconButton key={i} aria-label={n}><Icon name={n} /></IconButton>
      )
    )}
  </>
);

/* ------------------------------------------------------------------ */
/* Workspace                                                           */
/* ------------------------------------------------------------------ */

const Body = styled.main`
  display: flex;
  flex: 1;
  min-height: 0;
`;
const Dock = styled.aside`
  display: flex;
  gap: 4px;
  flex: none;
  width: 56px;
  overflow: hidden;
`;
const DockColumn = styled.div`
  display: flex;
  flex-direction: column;
  gap: 1px;
  width: 24px;
`;
const DockGroup = styled.div`
  display: flex;
  flex-direction: column;
  align-items: center;
  flex: none;
  padding: 9px 2px 0 0;
  box-shadow: inset 0 0 0 1px #3a3a3a;
`;
const DockSep = styled.span`
  width: 19px;
  height: 1px;
  margin: 3px 0 2px;
  background: #e8e8e8;
`;
const VTools = ({ items }: { items: string }) => (
  <DockGroup>
    {items.split(" ").map((n, i) =>
      n === "|" ? <DockSep key={i} /> : <IconButton key={i} aria-label={n}><Icon name={n} /></IconButton>
    )}
  </DockGroup>
);

const View = styled.section`
  display: flex;
  flex-direction: column;
  flex: 1;
  min-width: 0;
`;
const ViewRow = styled.div`
  display: flex;
  flex: 1;
  min-height: 0;
`;
const Canvas = styled.div`
  position: relative;
  flex: 1;
  min-width: 0;
  overflow: hidden;
  background: #000;
`;
const Model = styled.svg`
  position: absolute;
  inset: 0;
  width: 100%;
  height: 100%;
`;
const ViewportLabel = styled.div`
  position: absolute;
  left: 4px;
  top: 6px;
  color: #e6e6e6;
  font-size: 12px;
  line-height: 16px;
`;
const Compass = styled.svg`
  position: absolute;
  right: 17px;
  top: 14px;
  overflow: visible;
`;
const Wcs = styled.button`
  position: absolute;
  right: 59px;
  top: 169px;
  display: flex;
  align-items: center;
  justify-content: space-between;
  width: 48px;
  height: 17px;
  padding: 0 6px 0 4px;
  border: 1px solid #a4a4b0;
  border-radius: 4px;
  background: #85858f;
  color: #d0d0d8;
  font: 11px "Liberation Sans", sans-serif;
`;
const VScroll = styled.div`
  display: flex;
  flex-direction: column;
  width: 16px;
  background: #eee;
`;
const HScroll = styled.div`
  display: flex;
  flex: none;
  height: 17px;
  padding-right: 16px;
  border-top: 1px solid #fff;
  background: #ececec;
`;
const Space = styled.span<{ $n: number }>`flex: ${(p) => p.$n} 1 0;`;
const Thumb = styled.span`
  width: 15px;
  height: 15px;
  border: 1px solid #8c8c8c;
  border-radius: 1px;
  background: linear-gradient(#f6f6f6, #cfcfcf);
`;

/* ---- drawing content ---- */

const rnd = (seed: number) => {
  let s = (seed * 2654435761) >>> 0;
  return () => {
    s = (s + 0x6d2b79f5) >>> 0;
    let t = Math.imul(s ^ (s >>> 15), s | 1);
    t ^= t + Math.imul(t ^ (t >>> 7), t | 61);
    return ((t ^ (t >>> 14)) >>> 0) / 4294967296;
  };
};

const PALETTES: Record<string, string[]> = {
  n: ["#ff00ff", "#ff00ff", "#ff00ff", "#f02080", "#e8d060", "#ff60c0", "#a03060", "#d07060"],
  h: ["#ff00ff", "#ff00ff", "#ff00ff", "#ff20c0", "#d02080"],
  y: ["#e8e040", "#e8c040", "#ff40ff", "#302000", "#e08040"],
  c: ["#ff00ff", "#ff20ff", "#30b8d8", "#a050e0", "#ff40ff", "#201030"],
  r: ["#ff0000", "#ff0000", "#e01030", "#a07070", "#509090", "#ff0060"],
  g: ["#909090", "#b030b0", "#909090", "#c02060", "#50b050"],
  s: ["#40e8e0", "#ff00ff", "#40d0d0", "#208080", "#c060ff", "#70f0f0"],
  m: ["#ff00ff", "#c040ff", "#ff00ff", "#50b8d0", "#8060c0", "#ff40c0"],
  b: ["#ff00ff", "#ff00ff", "#e020ff", "#b040e0"],
};

const noise = (x: number, y: number, w: number, h: number, kind: string, seed: number) => {
  const r = rnd(seed);
  const pal = PALETTES[kind[0]];
  const stripes = kind[0] === "s" || kind[0] === "m" || kind[0] === "b";
  const cols = Array.from({ length: w }, () => pal[Math.floor(r() * pal.length)]);
  const paths: Record<string, string> = {};
  for (let j = 0; j < h; j++) {
    for (let i = 0; i < w; i++) {
      const c = stripes && r() < 0.85 ? cols[i] : pal[Math.floor(r() * pal.length)];
      paths[c] = (paths[c] ?? "") + `M${x + i} ${y + j}h1v1h-1z`;
    }
  }
  return Object.entries(paths).map(([c, d]) => <path key={c} d={d} fill={c} />);
};

const scribble = (cx: number, y: number, w: number, h: number, seed: number, color = "#f00000") => {
  const r = rnd(seed + 77);
  let d = "";
  const x0 = Math.round(cx - w / 2);
  for (let j = 0; j < h; j++) for (let i = 0; i < w; i++) {
    const edge = j === 0 || j === h - 1;
    if (r() < (edge ? 0.5 : 0.85)) d += `M${x0 + i} ${y + j}h1v1h-1z`;
  }
  return <path d={d} fill={color} />;
};

const COLS = [650, 691, 733, 774, 815, 856, 897, 938, 979];

/* One sheet: total width followed by the pattern key. */
const ROWS: { y: number; label: [number, number]; caption: number; sheets: string[] }[] = [
  { y: 381, label: [10, 6], caption: 18, sheets: ["34T"] },
  { y: 407, label: [12, 4], caption: 21, sheets: ["28c"] },
  { y: 434, label: [10, 2], caption: 12, sheets: ["34H", "34H", "27y", "27c"] },
  { y: 461, label: [9, 2], caption: 18, sheets: ["28R", "34R", "27S", "34G", "28S", "28S", "28S", "28r", "28r"] },
  { y: 487, label: [11, 7], caption: 9, sheets: ["34n", "34n"] },
  { y: 514, label: [11, 7], caption: 9, sheets: ["34n", "34n", "34n", "34n"] },
  { y: 541, label: [21, 4], caption: 9, sheets: ["28n", "28n", "34n", "34n"] },
  { y: 567, label: [11, 7], caption: 9, sheets: ["28n", "28n", "28n", "28n"] },
  { y: 593, label: [20, 5], caption: 9, sheets: ["28n", "28n", "28n", "28n"] },
  { y: 620, label: [11, 7], caption: 8, sheets: ["28n", "28n"] },
  { y: 647, label: [4, 2], caption: 5, sheets: ["28K", "34L", "34Y", "34Y"] },
  { y: 674, label: [5, 2], caption: 6, sheets: ["41B"] },
  { y: 700, label: [9, 2], caption: 11, sheets: ["34V", "41V"] },
  { y: 726, label: [9, 2], caption: 12, sheets: ["28g", "34M", "27m", "34Q", "28m", "28m", "28m", "28z", "28z"] },
];

const Sheet = ({ x, y, spec, seed }: { x: number; y: number; spec: string; seed: number }) => {
  const w = parseInt(spec, 10);
  const k = spec[2];
  const iw = w - 9;
  const red = "RLBg".includes(k);
  let art: React.ReactNode;
  if (k === "T") art = <>{noise(x + 3, y + 2, 7, 6, "c", seed)}{noise(x + 23, y + 2, 6, 6, "c", seed + 1)}{noise(x + 14, y + 8, 5, 3, "h", seed)}{noise(x + 2, y + 11, 27, 7, "h", seed)}</>;
  else if (k === "H") art = <>{noise(x + 2, y + 2, iw + 3, 15, "h", seed)}{noise(x + 4, y + 6, iw, 2, "y", seed)}<path d={`M${x + 2} ${y + 4}h${iw + 3}v1h-${iw + 3}z`} fill="#a03060" /></>;
  else if (k === "R") art = noise(x + 5, y + 4, iw - 3, 14, "r", seed);
  else if (k === "r") art = <>{noise(x + 1, y, 6, 3, "b", seed)}{noise(x + 3, y + 6, 20, 9, "g", seed)}{noise(x + 6, y + 7, 14, 6, "r", seed)}</>;
  else if (k === "z") art = <>{noise(x + 1, y, 6, 3, "b", seed)}{noise(x + 4, y + 6, 19, 9, "g", seed)}</>;
  else if (k === "S") art = <>{noise(x + 2, y + 2, iw + 3, 11, "s", seed)}{noise(x + 3, y + 13, iw + 1, 5, "r", seed)}</>;
  else if (k === "G" || k === "Q") art = <>{noise(x + 2, y + 2, 15, 12, k === "G" ? "s" : "m", seed)}<rect x={x + 17} y={y + 2} width={13} height={12} fill="#888" />{noise(x + 3, y + 13, iw + 2, 5, k === "G" ? "r" : "n", seed)}</>;
  else if (k === "K") art = <>{noise(x + 2, y + 2, iw + 1, 4, "c", seed)}{noise(x + 1, y + 6, iw + 3, 9, "h", seed)}{noise(x + 1, y + 15, 12, 3, "b", seed)}</>;
  else if (k === "L") art = <>{noise(x + 2, y + 3, 28, 5, "y", seed)}{noise(x + 2, y + 9, 15, 8, "n", seed)}{noise(x + 18, y + 9, 12, 8, "h", seed)}</>;
  else if (k === "Y") art = <>{noise(x + 2, y + 2, 16, 15, "y", seed)}{noise(x + 14, y + 8, 16, 5, "b", seed)}</>;
  else if (k === "B") art = <>{noise(x + 3, y + 4, 32, 3, "s", seed)}{noise(x + 2, y + 8, 33, 7, "c", seed)}{noise(x + 3, y + 14, 9, 3, "y", seed)}</>;
  else if (k === "V") art = <>{noise(x + 1, y + 1, iw + 2, 18, "b", seed)}{w === 34 && <rect x={x + 2} y={y + 3} width="8" height="10" fill="#888" />}{noise(x + w - 11, y + 2, 7, 8, "y", seed)}</>;
  else art = <>{noise(x + 3, y + 2, iw, 16, k === "M" ? "m" : k, seed)}<rect x={x + 5} y={y + 17} width="7" height="2" fill="#f0f" /></>;
  return (
    <g>
      <rect x={x} y={y} width={w} height="19" fill="#000" stroke={red ? "#b01010" : "#0e5872"} strokeWidth="2" />
      {art}
      <rect x={x + w - 5} y={y} width="5" height="19" fill="#0e5872" />
      <path d={`M${x + w - 4} ${y + 1}h3v3h-3zM${x + w - 4} ${y + 14}h2v3h-2z`} fill="#fff" />
      <path d={`M${x + w - 3} ${y + 7}h1v4h-1z`} fill="#022" />
    </g>
  );
};

const H_LINES = [339, 347, 374, 381, 400, 408, 427, 435, 453, 461, 480, 488, 506, 514, 533, 541, 560, 567, 586, 594, 613, 620, 639, 647, 666, 674, 692, 700, 719, 727, 745, 753, 772, 780];
const V_LINES = [601, 609, 642, 650, 684, 691, 725, 733, 766, 774, 807, 815, 848, 856, 889, 897, 930, 938, 971, 979, 1012, 1020];

/* Title blocks stacked on the right of the model: y, width, height, caption y, caption width. */
const BLOCKS: [number, number, number, number, number][] = [
  [135, 37, 27, 167, 20], [180, 47, 26, 214, 20], [225, 52, 27, 258, 17], [269, 26, 20, 295, 20],
  [305, 33, 20, 329, 21], [340, 40, 19, 363, 20], [373, 53, 20, 396, 20], [406, 60, 20, 428, 17],
  [438, 19, 14, 455, 19], [463, 23, 14, 480, 19], [488, 28, 14, 503, 17], [512, 13, 10, 527, 23],
  [534, 8, 10, 548, 13], [556, 14, 10, 0, 0],
];

const RedText = styled.text`
  fill: #f00016;
  font-family: "Noto Sans CJK SC", sans-serif;
  font-weight: 500;
`;
const DateText = styled.text`
  fill: #f01020;
  font: 300 21px Roboto, sans-serif;
`;
const BlockText = styled.text`
  fill: #fff;
  font: 700 8px "Noto Sans CJK SC", sans-serif;
`;

const Drawing = () => (
  <Model shapeRendering="crispEdges">
    <g transform="translate(-56 -129)">
      <rect x="493" y="281" width="172" height="25" fill="#c8c8c8" />
      <RedText x="452" y="298" fontSize="9">保存时间:</RedText>
      <DateText x="494" y="301">2017/8/10 8:24:55</DateText>
      <RedText x="466" y="332" fontSize="10">仅此框内图纸有效!</RedText>
      <g fill="none" stroke="#a8a8a8">
        <path d={H_LINES.map((y) => `M444 ${y}.5H1196`).join("")} />
        <path d={V_LINES.map((x) => `M${x}.5 339V780`).join("")} />
      </g>
      <path d="M444.500 312.500h752v537h-752zM444.500 832.500h180v17M488.500 832v17" fill="none" stroke="#f0f0f0" />
      <BlockText x="448" y="845">唯一编号:</BlockText>
      <BlockText x="492" y="845">强电系统图</BlockText>
      {ROWS.map((row, ri) => (
        <g key={row.y}>
          {scribble(627, row.y + 10 - Math.floor(row.label[1] / 2), row.label[0], row.label[1] + 1, ri)}
          {row.sheets.map((s, ci) => (
            <g key={ci}>
              <Sheet x={COLS[ci]} y={row.y} spec={s} seed={ri * 16 + ci + 1} />
              {scribble(COLS[ci] + (parseInt(s, 10) - 1) / 2, row.y + 21, row.caption, 3, ri * 31 + ci)}
              <path d={`M${COLS[ci] - 6} ${row.y + 9}l2 4 4-8`} fill="none" stroke="#00d818" shapeRendering="auto" />
            </g>
          ))}
        </g>
      ))}
      {BLOCKS.map(([y, w, h, cy, cw], i) => (
        <g key={y}>
          <path d={`M1591.500 ${y}.5h${w}v${h}h-${w}zM${1591 + w - 3}.5 ${y}v${h}`} fill="none" stroke="#8a8a8a" />
          {cw > 0 && ([1, 8, 9, 12].includes(i) ? scribble(1592 + cw / 2, cy, cw, 4, i, "#999") : <rect x="1592" y={cy} width={cw} height="5" fill="#858585" />)}
        </g>
      ))}
      <path d="M386 391h6v1h4v2h-10z" fill="#e8e040" />
      {noise(1245, 561, 6, 3, "h", 5)}
      {noise(1249, 564, 4, 3, "n", 8)}
      {noise(1255, 562, 5, 5, "y", 6)}
      {noise(1267, 561, 8, 4, "h", 7)}
      <g stroke="#b684d6" fill="none">
        <path d="M1535.500 0V804M1535.500 824V4000M0 814.500H1525M1546 814.500H9000" />
        <path d="M1525.500 804.500h20v20h-20z" stroke="#d8b8ea" />
      </g>
    </g>
  </Model>
);

const CompassLabel = styled.text`
  fill: #a8a8a8;
  font: 500 18px "Noto Sans CJK SC", sans-serif;
  text-anchor: middle;
`;
const ViewCube = () => (
  <Compass width="132" height="140" viewBox="0 0 132 140" role="img" aria-label="ViewCube">
    <circle cx="66" cy="68" r="54" fill="none" stroke="#2c2c2c" strokeWidth="12" />
    <rect x="40" y="42" width="52" height="52" fill="#a6a6a6" />
    <rect x="50" y="52" width="32" height="32" fill="#9b9ca2" />
    <path d="M65 56v21M65 64h12M51 77h30" stroke="#4a4d55" strokeWidth="1" />
    <path d="M64 56h3v21h-3zM73 64l4-2 2 2zM76 77l4-3 2 3z" fill="#4a4d55" />
    <CompassLabel x="66" y="20">北</CompassLabel>
    <CompassLabel x="66" y="133">南</CompassLabel>
    <CompassLabel x="10" y="76">西</CompassLabel>
    <CompassLabel x="122" y="76">东</CompassLabel>
  </Compass>
);

/* ------------------------------------------------------------------ */
/* Command line                                                        */
/* ------------------------------------------------------------------ */

const CommandPanel = styled.section`
  display: flex;
  flex: none;
  margin-top: 3px;
  background: #fff;
`;
const CommandGutter = styled.div`
  display: flex;
  flex-direction: column;
  align-items: center;
  width: 22px;
  padding-top: 3px;
  background: linear-gradient(#808080, #4c4c4c);
`;
const Grip = styled.span`
  width: 17px;
  height: 6px;
  background-image: radial-gradient(circle, #c8c8c8 1px, transparent 1px);
  background-size: 3px 3px;
`;
const CommandMain = styled.div`
  flex: 1;
  font-family: ${MONO};
  font-size: 13px;
`;
const History = styled.div`
  height: 34px;
  padding: 1px 3px 0;
  border-bottom: 1px solid #777;
  line-height: 15px;
  color: #1a1a1a;
  white-space: pre;
`;
const Prompt = styled.label`
  display: flex;
  align-items: center;
  height: 22px;
  padding-left: 5px;
`;
const PromptIcon = styled.span`
  width: 15px;
  height: 14px;
  margin-right: 4px;
  border: 1px solid #9aa3b0;
  background: #dde3ea;
  color: #333;
  font: 700 9px/12px "Liberation Mono", monospace;
  text-align: center;
`;
const PromptInput = styled.input`
  flex: 1;
  margin-left: 6px;
  font-style: italic;
  &::placeholder { color: #999; opacity: 1; }
`;

/* ------------------------------------------------------------------ */
/* Status bar                                                          */
/* ------------------------------------------------------------------ */

const StatusBar = styled.footer`
  position: relative;
  display: flex;
  justify-content: flex-end;
  flex: none;
  height: 29px;
  border-top: 1px solid #8a8a8a;
  background: #3a3a3a;
  color: #fff;
`;
const Cell = styled.div<{ $gap?: boolean }>`
  display: flex;
  align-items: center;
  height: 27px;
  border: 1px solid #808080;
  border-right-width: ${(p) => (p.$gap ? 1 : 0)}px;
  background: #4f4f4f;
`;
const Coords = styled.span`
  width: 240px;
  padding-right: 5px;
  text-align: right;
  white-space: nowrap;
`;
const TextButton = styled.button<{ $w: number; $left?: boolean }>`
  display: flex;
  align-items: center;
  justify-content: ${(p) => (p.$left ? "flex-start" : "center")};
  gap: 7px;
  width: ${(p) => p.$w}px;
  padding-left: ${(p) => (p.$left ? 4 : 0)}px;
  white-space: nowrap;
`;
const Watermark = styled.div`
  position: absolute;
  right: 25px;
  bottom: 9px;
  color: #f4f4f4;
  font: 400 42px/56px "Noto Sans CJK SC", sans-serif;
  text-shadow: 1px 1px 1px #555, -1px -1px 1px #999;
  white-space: nowrap;
  pointer-events: none;
`;

/* [icon, width] pairs; "v" is a drop-down arrow. */
type Seg = [string, number];
const CELLS_A: Seg[][] = [
  [["grid", 26], ["snap", 24], ["v", 15]],
  [["infer", 25]],
  [["dyn", 24]],
  [["ortho", 24], ["polar", 23], ["v", 16], ["iso", 22], ["v", 17]],
  [["otrack", 24], ["osnap", 24], ["v", 15]],
  [["lwt", 24]],
  [["transparency", 24]],
  [["cycling", 24]],
  [["osnap3d", 24], ["v", 16]],
  [["ducs", 26], ["cube", 24], ["v", 16], ["gizmo", 22], ["v", 16]],
];
const CELLS_B: Seg[][] = [
  [["gear", 26], ["v", 14]],
  [["plus", 26]],
];
const CELLS_C: Seg[][] = [
  [["quickProps", 25]],
  [["lockUi", 26], ["v", 15]],
  [["isolate", 25]],
  [["hardware", 26]],
  [["trusted", 24]],
  [["clean", 26], ["menu", 23]],
];
const Cells = ({ cells }: { cells: Seg[][] }) => (
  <>
    {cells.map((segs, i) => (
      <Cell key={i}>
        {segs.map(([n, w], j) => (
          <IconButton key={j} $w={w} $h={24} aria-label={n === "v" ? "more" : n}>
            {n === "v" ? <Caret /> : <Icon name={n} />}
          </IconButton>
        ))}
      </Cell>
    ))}
  </>
);

/* ------------------------------------------------------------------ */
/* Page                                                                */
/* ------------------------------------------------------------------ */

const MENUS = ["文件(F)", "编辑(E)", "视图(V)", "插入(I)", "格式(O)", "工具(T)", "绘图(D)", "标注(N)", "修改(M)", "参数(P)", "窗口(W)", "帮助(H)", "Express"];

const Arrow = ({ d }: { d: string }) => (
  <svg width="16" height="16" viewBox="0 0 16 16" aria-hidden="true"><path d={d} fill="#333" /></svg>
);

export default function App() {
  return (
    <Shell>
      <GlobalStyle />
      <Header>
        <AppButton aria-label="application menu">
          <svg width="26" height="28" viewBox="0 0 26 28">
            <path d="M10 2h5l9 24h-7l-2-6-5-2-2 3-2 5H1z" fill="#c8201e" />
            <path d="M10 2h5l2 10-5 8-4 1z" fill="#e8413a" />
            <path d="M12 9l3 9-6 1z" fill="#7a0c0c" />
            <path d="M15 2l9 24h-4L13 8z" fill="#8f1212" />
          </svg>
          <Caret color="#222" w={7} />
        </AppButton>
        <HeaderRows>
          <TitleBar>
            <QuickAccess>
              {["new", "open", "save", "saveAs", "undo"].map((n) => <IconButton key={n} $w={24} aria-label={n}><Icon name={n} /></IconButton>)}
              <IconButton $w={12} aria-label="undo list"><Caret w={5} /></IconButton>
              <IconButton $w={24} aria-label="redo"><Icon name="redoDim" /></IconButton>
              <IconButton $w={12} aria-label="redo list"><Caret w={5} /></IconButton>
              <IconButton $w={24} aria-label="print"><Icon name="print" /></IconButton>
              <IconButton $w={16} aria-label="customize"><svg width="8" height="8" viewBox="0 0 8 8"><path d="M0 0h8v1H0zM0 3h8L4 7z" fill="#fff" /></svg></IconButton>
            </QuickAccess>
            <TitleArea>
              <Smudge $l={5} $w={1} $h={10} $c="#b86880" />
              <Smudge $l={7} $w={15} $h={10} $c="#8499b3" />
              <Smudge $l={26} $w={1} $h={9} $c="#e08a9a" />
              <Smudge $l={74} $w={9} $h={10} $c="#8ca8c6" />
              <Smudge $l={90} $w={1} $h={9} $c="#5a90e0" />
              <Smudge $l={92} $w={8} $h={12} $c="#8199b8" />
              <TitleText>Autodesk AutoCAD 2016</TitleText>
              <TitleText>E:\360data\重要数据\Desktop\FL805KD0_E03-强电系统图.dwg</TitleText>
            </TitleArea>
            <InfoCenter>
              <IconButton $w={12} aria-label="collapse search"><svg width="5" height="8" viewBox="0 0 5 8"><path d="M0 0l5 4-5 4z" fill="#fff" /></svg></IconButton>
              <InfoSearch aria-label="search" placeholder="键入关键字或短语" />
              <IconButton $w={24} aria-label="search help"><Icon name="binoc" /></IconButton>
              <IconButton $w={24} aria-label="account"><Icon name="user" /></IconButton>
              <UserName>曾峭</UserName>
              <IconButton $w={12} aria-label="account list"><Caret w={5} /></IconButton>
              <IconButton $w={26} aria-label="exchange"><Icon name="exchange" /></IconButton>
              <IconButton $w={24} aria-label="a360"><Icon name="a360" /></IconButton>
              <IconButton $w={8} aria-label="a360 list"><Caret w={5} /></IconButton>
              <InfoRule />
              <IconButton $w={24} aria-label="help"><Icon name="helpRound" /></IconButton>
              <IconButton $w={17} aria-label="resize"><svg width="15" height="9" viewBox="0 0 15 9"><path d="M0 4.500L4 0v3h7V0l4 4.500L11 9V6H4v3z" fill="#fff" stroke="#333" strokeWidth=".7" /></svg></IconButton>
            </InfoCenter>
            <WindowButtons>
              <WinButton aria-label="minimize"><svg width="12" height="5" viewBox="0 0 12 5"><rect x=".5" y=".5" width="11" height="4" fill="#fff" stroke="#445" /></svg></WinButton>
              <WinButton aria-label="restore"><svg width="13" height="12" viewBox="0 0 13 12"><path d="M3.500.5h9v8h-9zM.5 3.500h8v8h-8z" fill="#fff" stroke="#445" /><rect x="3" y="6" width="3" height="3" fill="#778" /></svg></WinButton>
              <WinButton $close aria-label="close"><svg width="13" height="11" viewBox="0 0 13 11"><path d="M2 1l9 9M11 1l-9 9" stroke="#633" strokeWidth="4" /><path d="M2 1l9 9M11 1l-9 9" stroke="#fff" strokeWidth="2.500" /></svg></WinButton>
            </WindowButtons>
          </TitleBar>
          <MenuBar>
            {MENUS.map((m) => <MenuItem key={m}>{m}</MenuItem>)}
            <DocButtons>
              <IconButton $w={17} aria-label="minimize drawing"><svg width="10" height="10"><path d="M0 7h10v2H0z" fill="#222" /></svg></IconButton>
              <IconButton $w={17} aria-label="restore drawing"><svg width="12" height="11"><path d="M4.500 1.500h7v5h-3M.5 4.500h7v5h-7z" fill="none" stroke="#222" strokeWidth="1.500" /></svg></IconButton>
              <IconButton $w={17} aria-label="close drawing"><svg width="9" height="9"><path d="M1 1l7 7M8 1L1 8" stroke="#222" strokeWidth="2" /></svg></IconButton>
            </DocButtons>
          </MenuBar>
        </HeaderRows>
      </Header>

      <TabBar>
        <Tab $w={132}>开始</Tab>
        <Tab $w={202} $active>FL805KD0_E03-强电系统图*<svg width="8" height="8"><path d="M1 1l6 6M7 1L1 7" stroke="#333" strokeWidth="2" /></svg></Tab>
        <NewTab aria-label="new tab">+</NewTab>
      </TabBar>

      <Toolbars>
        <ToolbarRow>
          <Group $grip={7}>
            <Tools items="new open save | print preview publish print3d | cut copy paste match block | undo v redo v | hand zoomRt zoomWin zoomPrev | props designCenter toolPalette sheetSet markup calc | help" />
          </Group>
          <Group $grip={7} $end={1}>
            <Tools items="ucs ucsNamed |" />
            <Combo label="UCS" value="世界" w={176} l={3} pad={26} lead={<svg width="16" height="16"><circle cx="8" cy="8" r="7" fill="#c4ccc8" stroke="#667" /><path d="M4 4l4-1 1 4-3 3zM10 5l3 1-1 5-2-2z" fill="#5a6a66" /></svg>} />
          </Group>
          <Group $grip={6}><Tools items="textStyle" /><Combo label="text style" value="_TEL_DIM" w={118} pad={17} /></Group>
          <Group $grip={6}><Tools items="dimStyle" /><Combo label="dimension style" value="dim100me" w={118} pad={17} /></Group>
          <Group $grip={6}><Tools items="tableStyle" /><Combo label="table style" value="Standard" w={118} pad={4} /></Group>
          <Group $grip={6}><Tools items="leaderStyle" /><Combo label="leader style" value="Standard" w={118} pad={17} /></Group>
        </ToolbarRow>
        <ToolbarRow>
          <Group $grip={7} $end={4}>
            <Tools items="layerProps" />
            <Combo label="layer" value="E-REVISE" w={298} l={2} pad={84} lead={<><Icon name="bulb" size={14} /><Icon name="sun" /><Icon name="vpFreeze" /><Icon name="unlock" /><Swatch /></>} />
            <Tools items="layerCurrent layerPrev layerState" />
          </Group>
          <Group $grip={4}>
            <Tools items="layMatch layCheck layIso layUniso layFreezeVp layWalk | layFreeze layOff layLock layUnlock" />
          </Group>
          <Group $grip={10} $end={1}>
            <Combo label="color" value="ByLayer" w={149} pad={18} serif lead={<Swatch />} />
            <Combo label="linetype" value="ByLayer" w={158} l={7} pad={68} serif lead={<Stroke $w={60} />} />
            <Combo label="lineweight" value="ByLayer" w={123} l={8} pad={42} serif lead={<Stroke $w={35} />} />
            <Combo label="plot style" value="ByColor" w={119} l={7} pad={8} serif off />
          </Group>
        </ToolbarRow>
      </Toolbars>

      <Body>
        <Dock>
          <DockColumn>
            <VTools items="line xline pline polygon rect arc circle cloud spline ellipse ellipseArc insert makeBlock point hatch gradient region table mtext addSel" />
            <VTools items="front back above under | textFront hatchBack" />
          </DockColumn>
          <DockColumn>
            <VTools items="erase copyObj mirror offset array move rotate scale stretch trim extend breakPt breakObj join chamfer fillet blend explode" />
            <VTools items="dLinear dAligned dArc dOrdinate | dRadius dJogged dDiameter dAngular | dQuick dBaseline dContinue dSpace dBreak | tolerance centerMark inspect jogLine | dEdit dTextEdit dUpdate" />
          </DockColumn>
        </Dock>
        <View>
          <ViewRow>
            <Canvas>
              <Drawing />
              <ViewportLabel>[−][俯视][二维线框]</ViewportLabel>
              <ViewCube />
              <Wcs>WCS<svg width="6" height="3"><path d="M0 0h6v3H0z" fill="#c8c8d0" /></svg></Wcs>
            </Canvas>
            <VScroll>
              <IconButton $w={16} $h={16} aria-label="scroll up"><Arrow d="M4 10h8L8 6z" /></IconButton>
              <Space $n={796} />
              <Thumb />
              <Space $n={2} />
              <IconButton $w={16} $h={16} aria-label="scroll down"><Arrow d="M4 6h8l-4 4z" /></IconButton>
            </VScroll>
          </ViewRow>
          <HScroll>
            <IconButton $w={16} $h={16} aria-label="scroll left"><Arrow d="M10 4v8L6 8z" /></IconButton>
            <Space $n={774} />
            <Thumb />
            <Space $n={1025} />
            <IconButton $w={16} $h={16} aria-label="scroll right"><Arrow d="M6 4v8l4-4z" /></IconButton>
          </HScroll>
        </View>
      </Body>

      <CommandPanel>
        <CommandGutter>
          <Grip />
          <IconButton $h={22} aria-label="close command line"><Icon name="closeX" size={14} /></IconButton>
          <IconButton $h={22} aria-label="customize command line"><Icon name="wrench" /></IconButton>
        </CommandGutter>
        <CommandMain>
          <History>{"命令: 指定对角点或 [栏选(F)/圈围(WP)/圈交(CP)]:\n命令: *取消*"}</History>
          <Prompt>
            <PromptIcon>&gt;_</PromptIcon>
            <Caret color="#888" w={6} />
            <PromptInput aria-label="command" placeholder="键入命令" />
          </Prompt>
        </CommandMain>
      </CommandPanel>

      <StatusBar>
        <Cell $gap><Coords>5960588.9724, -259761.9955, 0.0000</Coords></Cell>
        <Cell><TextButton $w={30}>模型</TextButton></Cell>
        <Cells cells={CELLS_A} />
        <Cell>
          <IconButton $w={26} aria-label="annotation visibility"><Icon name="annVisible" /></IconButton>
          <IconButton $w={24} aria-label="annotation autoscale"><Icon name="annAuto" /></IconButton>
          <IconButton $w={24} aria-label="annotation scale"><Icon name="annScale" /></IconButton>
          <TextButton $w={79} $left>1:1 / 100%<Caret /></TextButton>
        </Cell>
        <Cells cells={CELLS_B} />
        <Cell>
          <IconButton $w={28} aria-label="units"><Icon name="ruler" /></IconButton>
          <TextButton $w={52} $left>小数</TextButton>
          <IconButton $w={17} aria-label="units list"><Caret /></IconButton>
        </Cell>
        <Cells cells={CELLS_C} />
        <Watermark>头条号 / 曾峭</Watermark>
      </StatusBar>
    </Shell>
  );
}
